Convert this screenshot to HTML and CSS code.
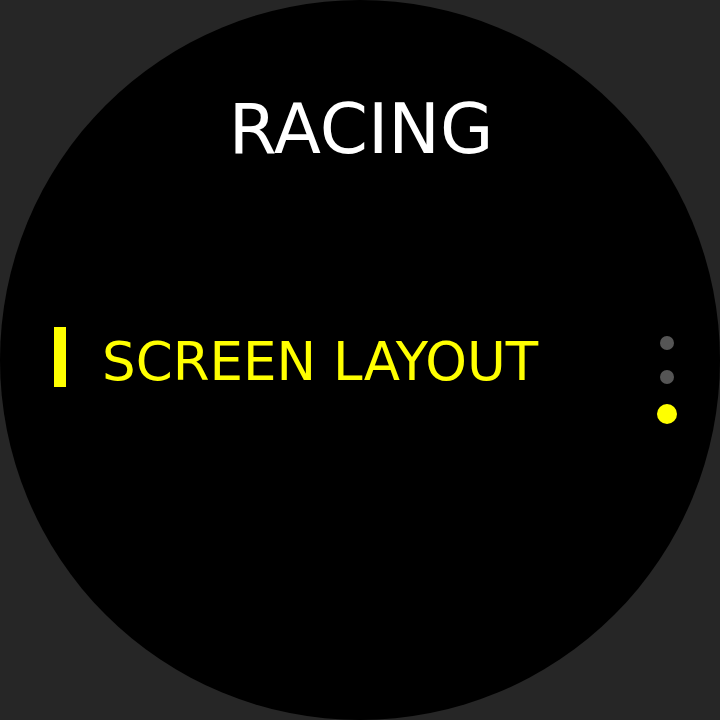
FILE: index.html
```html
<!DOCTYPE html>
<html>
<head>
<meta charset="utf-8">
<link rel="stylesheet" href="styles.css">
</head>
<body>
<div class="watch">
  <div class="title">RACING</div>
  <div class="menu-row">
    <div class="marker"></div>
    <div class="item">SCREEN LAYOUT</div>
  </div>
  <div class="pager">
    <span class="dot"></span>
    <span class="dot"></span>
    <span class="dot active"></span>
  </div>
</div>
</body>
</html>
```
FILE: styles.css
```css
html, body {
  margin: 0;
  padding: 0;
  background: #262626;
}
.watch {
  position: relative;
  width: 720px;
  height: 720px;
  border-radius: 50%;
  background: #000;
  font-family: "DejaVu Sans", sans-serif;
  display: flex;
  flex-direction: column;
  overflow: hidden;
}
.title {
  padding-top: 95px;
  text-align: center;
  color: #fff;
  font-size: 69px;
  line-height: 69px;
  padding-left: 2px;
}
.menu-row {
  margin-top: 163px;
  padding-left: 54px;
  display: flex;
  align-items: flex-start;
  gap: 36px;
}
.marker {
  width: 12px;
  height: 60px;
  background: #ffff00;
}
.item {
  padding-top: 5px;
  color: #ffff00;
  font-size: 53px;
  line-height: 60px;
  white-space: nowrap;
}
.pager {
  position: absolute;
  left: 657px;
  top: 336px;
  width: 20px;
  display: flex;
  flex-direction: column;
  align-items: center;
  gap: 20px;
}
.dot {
  display: block;
  width: 14px;
  height: 14px;
  border-radius: 50%;
  background: #555;
}
.dot.active {
  width: 20px;
  height: 20px;
  margin-top: 0;
  background: #ffff00;
}
```
